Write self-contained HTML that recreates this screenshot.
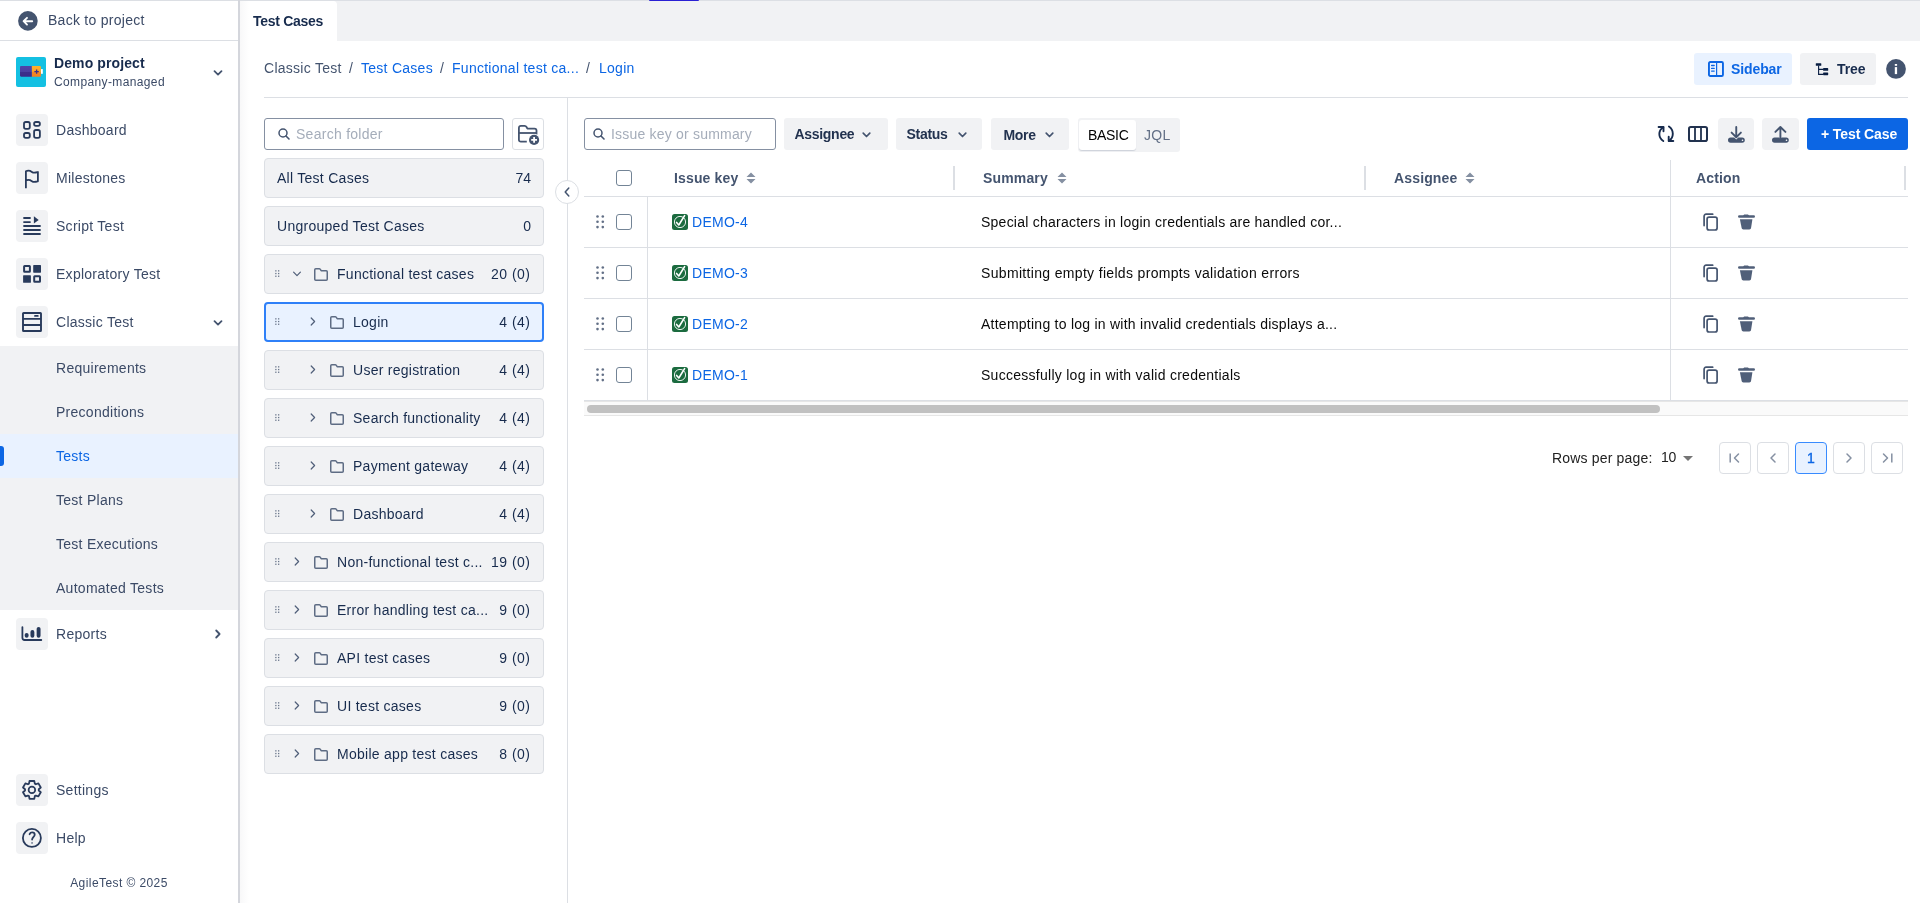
<!DOCTYPE html>
<html><head><meta charset="utf-8">
<style>
*{box-sizing:border-box;margin:0;padding:0}
html,body{will-change:transform;width:1920px;height:903px;overflow:hidden;background:#fff;font-family:"Liberation Sans",sans-serif;color:#172b4d;font-size:14px}
.a{position:absolute}
.t{position:absolute;white-space:nowrap;line-height:1}
.ibox{position:absolute;left:16px;width:32px;height:32px;background:#f1f2f4;border-radius:4px}
.ibox svg{position:absolute;left:0;top:0}
.box{position:absolute;left:264px;width:280px;height:39.5px;background:#f1f2f4;border:1px solid #dcdfe4;border-radius:4px}
.box.sel{background:#e9f2ff;border:2px solid #2f80f8}
svg{position:absolute;overflow:visible}
</style></head><body>
<div class="a" style="left:0;top:0;width:1920px;height:1px;background:#dcdfe4"></div>
<div class="a" style="left:238px;top:0;width:2px;height:903px;background:#d4d6dc"></div>
<div class="a" style="left:240px;top:41px;width:9px;height:862px;background:linear-gradient(to right,#f8f8f9,rgba(255,255,255,0))"></div>
<svg style="left:18px;top:11px" width="20" height="20" viewBox="0 0 20 20"><circle cx="9.9" cy="9.9" r="9.8" fill="#44546f"/><path d="M14.2 10.2H6.4M9 6.8L5.6 10.2 9 13.6" stroke="#fff" stroke-width="1.9" fill="none" stroke-linecap="round" stroke-linejoin="round"/></svg>
<div class="t" style="left:48px;top:13.15px;font-size:14px;letter-spacing:0.27px;color:#3b4a66">Back to project</div>
<div class="a" style="left:0;top:40px;width:238px;height:1px;background:#dcdfe4"></div>
<div class="a" style="left:16px;top:57px;width:30px;height:30px;background:#14c0e2;border-radius:2px"></div>
<svg style="left:16px;top:57px" width="30" height="30" viewBox="0 0 30 30"><defs><linearGradient id="gp" x1="0" y1="0" x2="0" y2="1"><stop offset="0" stop-color="#4f44a8"/><stop offset="0.55" stop-color="#4a3f9f"/><stop offset="0.56" stop-color="#3d2f8c"/><stop offset="1" stop-color="#3a2b88"/></linearGradient><linearGradient id="go" x1="0" y1="0" x2="0" y2="1"><stop offset="0" stop-color="#ffb02a"/><stop offset="0.5" stop-color="#fca426"/><stop offset="0.52" stop-color="#f38b25"/><stop offset="1" stop-color="#f47f1f"/></linearGradient></defs><path d="M5.2 9.1H15.9V19.8H5.2C4.5 19.8 4 19.3 4 18.6V10.3C4 9.6 4.5 9.1 5.2 9.1z" fill="url(#gp)"/><path d="M15.9 9.1H23.8C24.4 9.1 24.9 9.6 24.9 10.2V18.7C24.9 19.3 24.4 19.8 23.8 19.8H15.9z" fill="url(#go)"/><rect x="25" y="12.1" width="1.8" height="4.7" fill="#fff"/><path d="M20.6 12.4v4.4M18.4 14.6h4.4" stroke="#3b2e8a" stroke-width="1.3"/></svg>
<div class="t" style="left:54px;top:56.15px;font-size:14px;letter-spacing:0.10px;color:#172b4d;font-weight:bold">Demo project</div>
<div class="t" style="left:54px;top:75.84px;font-size:12px;letter-spacing:0.37px;color:#3b4a66">Company-managed</div>
<svg style="left:213px;top:70px" width="10" height="6" viewBox="0 0 10 6"><path d="M1.5 1.2L5 4.6l3.5-3.4" stroke="#44546f" stroke-width="1.8" fill="none" stroke-linecap="round" stroke-linejoin="round"/></svg>
<div class="ibox" style="top:114px"><svg width="32" height="32" viewBox="0 0 32 32"><rect x="8.0" y="8.0" width="5.8" height="6.9" rx="1.8" fill="none" stroke="#283a5b" stroke-width="1.8"/><rect x="18.1" y="8.0" width="5.8" height="3.9" rx="1.8" fill="none" stroke="#283a5b" stroke-width="1.8"/><rect x="8.0" y="19.0" width="5.8" height="4.9" rx="1.8" fill="none" stroke="#283a5b" stroke-width="1.8"/><rect x="18.1" y="16.0" width="5.8" height="7.9" rx="1.8" fill="none" stroke="#283a5b" stroke-width="1.8"/></svg></div>
<div class="t" style="left:56px;top:123.15px;font-size:14px;letter-spacing:0.27px;color:#3b4a66">Dashboard</div>
<div class="ibox" style="top:162px"><svg width="32" height="32" viewBox="0 0 32 32"><path d="M9.9 26.3V9.2c2.4-1.2 4.2-0.6 6 0.7c2 1.4 3.6 0.8 6 0.1V19.3c-2.4 0.7-4 1.3-6-0.1c-1.8-1.3-3.6-1.9-6-0.7" fill="none" stroke="#283a5b" stroke-width="1.8" stroke-linejoin="round"/></svg></div>
<div class="t" style="left:56px;top:171.15px;font-size:14px;letter-spacing:0.27px;color:#3b4a66">Milestones</div>
<div class="ibox" style="top:210px"><svg width="32" height="32" viewBox="0 0 32 32"><path d="M8 8h6M8 12.05h6M8 16h16M8 20h16M8 24h16" stroke="#283a5b" stroke-width="1.8" stroke-linecap="round"/><path d="M17.9 6.2L22.7 9.9 17.9 13.6z" fill="#283a5b"/></svg></div>
<div class="t" style="left:56px;top:219.15px;font-size:14px;letter-spacing:0.27px;color:#3b4a66">Script Test</div>
<div class="ibox" style="top:258px"><svg width="32" height="32" viewBox="0 0 32 32"><rect x="8.1" y="8.1" width="5.8" height="5.6" rx="0.5" fill="none" stroke="#283a5b" stroke-width="2"/><rect x="17.2" y="7.1" width="7.8" height="7.6" rx="0.6" fill="#283a5b"/><rect x="7.1" y="17.2" width="7.8" height="7.6" rx="0.6" fill="#283a5b"/><rect x="18.2" y="18.2" width="5.8" height="5.6" rx="0.5" fill="none" stroke="#283a5b" stroke-width="2"/></svg></div>
<div class="t" style="left:56px;top:267.15px;font-size:14px;letter-spacing:0.27px;color:#3b4a66">Exploratory Test</div>
<div class="ibox" style="top:306px"><svg width="32" height="32" viewBox="0 0 32 32"><rect x="7" y="7" width="18" height="18" rx="0.6" fill="none" stroke="#283a5b" stroke-width="1.9"/><path d="M7 12.9h18M7 19h18" stroke="#283a5b" stroke-width="1.8"/><path d="M19 9.9h2.8" stroke="#283a5b" stroke-width="1.8" stroke-linecap="round"/></svg></div>
<div class="t" style="left:56px;top:315.15px;font-size:14px;letter-spacing:0.27px;color:#3b4a66">Classic Test</div>
<svg style="left:213px;top:320px" width="10" height="6" viewBox="0 0 10 6"><path d="M1.5 1.2L5 4.6l3.5-3.4" stroke="#44546f" stroke-width="1.8" fill="none" stroke-linecap="round" stroke-linejoin="round"/></svg>
<div class="a" style="left:0;top:346px;width:238px;height:264px;background:#f1f2f4"></div>
<div class="a" style="left:0;top:434px;width:238px;height:44px;background:#e9f2ff"></div>
<div class="a" style="left:0;top:446px;width:4px;height:20px;background:#0c66e4;border-radius:0 3px 3px 0"></div>
<div class="t" style="left:56px;top:361.15px;font-size:14px;letter-spacing:0.27px;color:#3b4a66">Requirements</div>
<div class="t" style="left:56px;top:405.15px;font-size:14px;letter-spacing:0.27px;color:#3b4a66">Preconditions</div>
<div class="t" style="left:56px;top:449.15px;font-size:14px;letter-spacing:0.27px;color:#0c66e4">Tests</div>
<div class="t" style="left:56px;top:493.15px;font-size:14px;letter-spacing:0.27px;color:#3b4a66">Test Plans</div>
<div class="t" style="left:56px;top:537.15px;font-size:14px;letter-spacing:0.27px;color:#3b4a66">Test Executions</div>
<div class="t" style="left:56px;top:581.15px;font-size:14px;letter-spacing:0.27px;color:#3b4a66">Automated Tests</div>
<div class="ibox" style="top:618px"><svg width="32" height="32" viewBox="0 0 32 32"><path d="M6.4 9.2v10.6c0 1.3 1 2.2 2.2 2.2h16.7" fill="none" stroke="#283a5b" stroke-width="1.8" stroke-linecap="round"/><path d="M10.65 16.85v1M16.4 13.95v3.9M22.6 10.85v7" stroke="#283a5b" stroke-width="3.9" stroke-linecap="round"/></svg></div>
<div class="t" style="left:56px;top:627.15px;font-size:14px;letter-spacing:0.27px;color:#3b4a66">Reports</div>
<svg style="left:215px;top:629px" width="6" height="10" viewBox="0 0 6 10"><path d="M1.2 1.5L4.6 5 1.2 8.5" stroke="#44546f" stroke-width="1.8" fill="none" stroke-linecap="round" stroke-linejoin="round"/></svg>
<div class="ibox" style="top:774px"><svg width="32" height="32" viewBox="0 0 32 32"><path d="M13.52 7.01 L18.28 7.01 L18.82 9.65 L19.86 10.25 L22.41 9.39 L24.79 13.52 L22.77 15.30 L22.77 16.50 L24.79 18.28 L22.41 22.41 L19.86 21.55 L18.82 22.15 L18.28 24.79 L13.52 24.79 L12.98 22.15 L11.94 21.55 L9.39 22.41 L7.01 18.28 L9.03 16.50 L9.03 15.30 L7.01 13.52 L9.39 9.39 L11.94 10.25 L12.98 9.65Z" fill="none" stroke="#283a5b" stroke-width="1.8" stroke-linejoin="round"/><circle cx="15.9" cy="15.9" r="3.3" fill="none" stroke="#283a5b" stroke-width="1.7"/></svg></div>
<div class="t" style="left:56px;top:783.15px;font-size:14px;letter-spacing:0.27px;color:#3b4a66">Settings</div>
<div class="ibox" style="top:822px"><svg width="32" height="32" viewBox="0 0 32 32"><circle cx="15.9" cy="15.9" r="9" fill="none" stroke="#283a5b" stroke-width="1.8"/><path d="M13.6 12.2c0.5-1.2 1.4-1.8 2.5-1.8c1.5 0 2.6 1 2.6 2.3c0 1.9-2.6 2.4-2.6 4.9" fill="none" stroke="#283a5b" stroke-width="1.8" stroke-linecap="round"/><rect x="15.4" y="20.3" width="1.3" height="1.3" fill="#283a5b"/></svg></div>
<div class="t" style="left:56px;top:831.15px;font-size:14px;letter-spacing:0.27px;color:#3b4a66">Help</div>
<div class="t" style="left:0;width:238px;text-align:center;top:876.84px;font-size:12px;letter-spacing:0.42px;color:#3b4a66">AgileTest © 2025</div>
<div class="a" style="left:240px;top:1px;width:1680px;height:40px;background:#f1f2f4"></div>
<div class="a" style="left:240px;top:1px;width:97px;height:40px;background:#fff;border-radius:0 4px 0 0"></div>
<div class="t" style="left:253px;top:14.15px;font-size:14px;letter-spacing:-0.30px;color:#172b4d;font-weight:bold">Test Cases</div>
<div class="a" style="left:649px;top:0;width:50px;height:1px;background:#2a20d4;border-radius:0 0 1px 1px"></div>
<div class="a" style="left:240px;top:1px;width:9px;height:40px;background:linear-gradient(to right,#f8f8f9,rgba(255,255,255,0))"></div>
<div class="t" style="left:264px;top:61.15px;font-size:14px;letter-spacing:0.27px;color:#44546f">Classic Test</div>
<div class="t" style="left:349px;top:61.15px;font-size:14px;letter-spacing:0.27px;color:#44546f">/</div>
<div class="t" style="left:361px;top:61.15px;font-size:14px;letter-spacing:0.27px;color:#0c66e4">Test Cases</div>
<div class="t" style="left:440px;top:61.15px;font-size:14px;letter-spacing:0.27px;color:#44546f">/</div>
<div class="t" style="left:452px;top:61.15px;font-size:14px;letter-spacing:0.27px;color:#0c66e4">Functional test ca...</div>
<div class="t" style="left:586px;top:61.15px;font-size:14px;letter-spacing:0.27px;color:#44546f">/</div>
<div class="t" style="left:599px;top:61.15px;font-size:14px;letter-spacing:0.27px;color:#0c66e4">Login</div>
<div class="a" style="left:264px;top:97px;width:1644px;height:1px;background:#dcdfe4"></div>
<div class="a" style="left:1694px;top:53px;width:98px;height:32px;background:#e9f2ff;border-radius:3px"></div>
<svg style="left:1708px;top:61px" width="16" height="16" viewBox="0 0 16 16"><rect x="0.95" y="0.95" width="14" height="14" rx="1.3" fill="none" stroke="#0c66e4" stroke-width="1.9"/><path d="M8.6 1v14" stroke="#0c66e4" stroke-width="1.2"/><path d="M3.6 4.5h2.6M3.6 7.4h2.6M3.6 10.1h2.6" stroke="#0c66e4" stroke-width="1.3" stroke-linecap="round"/></svg>
<div class="t" style="left:1731px;top:62.15px;font-size:14px;letter-spacing:-0.10px;color:#0c66e4;font-weight:bold">Sidebar</div>
<div class="a" style="left:1800px;top:53px;width:76px;height:32px;background:#f1f2f4;border-radius:3px"></div>
<svg style="left:1815px;top:62px" width="15" height="15" viewBox="0 0 15 15"><rect x="0.8" y="1.2" width="5.5" height="2.6" rx="0.6" fill="#091e42"/><path d="M3.6 3.5V12.4H8.5M3.6 7.4H8.5" stroke="#091e42" stroke-width="1.1" fill="none"/><rect x="8.1" y="6.1" width="5.1" height="2.7" rx="0.6" fill="#091e42"/><rect x="8.1" y="10.4" width="5.1" height="2.8" rx="0.6" fill="#091e42"/></svg>
<div class="t" style="left:1837px;top:62.15px;font-size:14px;letter-spacing:-0.10px;color:#172b4d;font-weight:bold">Tree</div>
<svg style="left:1886px;top:59px" width="20" height="20" viewBox="0 0 20 20"><circle cx="10" cy="9.9" r="9.9" fill="#44546f"/><rect x="8.8" y="5" width="2.3" height="1.8" fill="#fff"/><rect x="8.8" y="8.1" width="2.3" height="7" fill="#fff"/></svg>
<div class="a" style="left:264px;top:118px;width:240px;height:32px;border:1px solid #8590a2;border-radius:3px;background:#fff"></div>
<svg style="left:278px;top:128px" width="12" height="12" viewBox="0 0 12 12"><circle cx="5" cy="5" r="4" fill="none" stroke="#44546f" stroke-width="1.5"/><path d="M8 8l3 3" stroke="#44546f" stroke-width="1.6" stroke-linecap="round"/></svg>
<div class="t" style="left:296px;top:127.15px;font-size:14px;letter-spacing:0.27px;color:#a5adba">Search folder</div>
<div class="a" style="left:512px;top:118px;width:32px;height:32px;border:1px solid #dcdfe4;border-radius:3px;background:#fff"></div>
<svg style="left:518px;top:125px" width="22" height="20" viewBox="0 0 22 20"><path d="M8.8 16.7H2.9C1.7 16.7 0.9 15.9 0.9 14.7V2.9C0.9 1.7 1.7 0.9 2.9 0.9H6.6C7.6 0.9 8.2 1.4 8.7 2.3L9.4 3.6H16.5C17.7 3.6 18.5 4.4 18.5 5.6V9.5" fill="none" stroke="#44546f" stroke-width="1.8" stroke-linejoin="round"/><path d="M0.9 8H18.5" stroke="#44546f" stroke-width="1.8"/><circle cx="16.1" cy="14.9" r="5.8" fill="#fff"/><circle cx="16.1" cy="14.9" r="5.1" fill="#44546f"/><path d="M16.1 12v5.8M13.2 14.9H19" stroke="#fff" stroke-width="1.8"/></svg>
<div class="box" style="top:158px"></div>
<div class="t" style="left:277px;top:171.15px;font-size:14px;letter-spacing:0.27px;color:#172b4d">All Test Cases</div>
<div class="t" style="right:1389px;top:171.15px;font-size:14px;color:#172b4d">74</div>
<div class="box" style="top:206px"></div>
<div class="t" style="left:277px;top:219.15px;font-size:14px;letter-spacing:0.27px;color:#172b4d">Ungrouped Test Cases</div>
<div class="t" style="right:1389px;top:219.15px;font-size:14px;color:#172b4d">0</div>
<div class="box" style="top:254px"></div>
<svg style="left:275px;top:270.2px" width="5" height="8" viewBox="0 0 5 8"><rect x="0.20000000000000007" y="0.20000000000000007" width="1.3" height="1.3" fill="#6b778c"/><rect x="0.20000000000000007" y="2.9" width="1.3" height="1.3" fill="#6b778c"/><rect x="0.20000000000000007" y="5.6000000000000005" width="1.3" height="1.3" fill="#6b778c"/><rect x="3.0" y="0.20000000000000007" width="1.3" height="1.3" fill="#6b778c"/><rect x="3.0" y="2.9" width="1.3" height="1.3" fill="#6b778c"/><rect x="3.0" y="5.6000000000000005" width="1.3" height="1.3" fill="#6b778c"/></svg>
<svg style="left:292px;top:270.5px" width="10" height="6" viewBox="0 0 10 6"><path d="M1.6 1.2L5 4.6 8.4 1.2" stroke="#505f79" stroke-width="1.2" fill="none" stroke-linecap="round" stroke-linejoin="round"/></svg>
<svg style="left:314px;top:267.5px" width="14" height="13" viewBox="0 0 14 13"><path d="M0.75 1.8c0-.6.4-1 1-1h3.5c.5 0 .8.2 1.1.6l.8 1.3h5.1c.6 0 1 .4 1 1v7.6c0 .6-.4 1-1 1H1.75c-.6 0-1-.4-1-1z" fill="none" stroke="#5e6c84" stroke-width="1.5" stroke-linejoin="round"/></svg>
<div class="t" style="left:337px;top:266.95px;font-size:14px;letter-spacing:0.27px;color:#172b4d">Functional test cases</div>
<div class="t" style="right:1389.5px;top:266.95px;font-size:14px;letter-spacing:0.5px;color:#172b4d">20 (0)</div>
<div class="box sel" style="top:302px"></div>
<svg style="left:275px;top:318.2px" width="5" height="8" viewBox="0 0 5 8"><rect x="0.20000000000000007" y="0.20000000000000007" width="1.3" height="1.3" fill="#6b778c"/><rect x="0.20000000000000007" y="2.9" width="1.3" height="1.3" fill="#6b778c"/><rect x="0.20000000000000007" y="5.6000000000000005" width="1.3" height="1.3" fill="#6b778c"/><rect x="3.0" y="0.20000000000000007" width="1.3" height="1.3" fill="#6b778c"/><rect x="3.0" y="2.9" width="1.3" height="1.3" fill="#6b778c"/><rect x="3.0" y="5.6000000000000005" width="1.3" height="1.3" fill="#6b778c"/></svg>
<svg style="left:310px;top:317.3px" width="6" height="9" viewBox="0 0 6 9"><path d="M1.2 1l3.4 3.5L1.2 8" stroke="#505f79" stroke-width="1.2" fill="none" stroke-linecap="round" stroke-linejoin="round"/></svg>
<svg style="left:330px;top:315.5px" width="14" height="13" viewBox="0 0 14 13"><path d="M0.75 1.8c0-.6.4-1 1-1h3.5c.5 0 .8.2 1.1.6l.8 1.3h5.1c.6 0 1 .4 1 1v7.6c0 .6-.4 1-1 1H1.75c-.6 0-1-.4-1-1z" fill="none" stroke="#5e6c84" stroke-width="1.5" stroke-linejoin="round"/></svg>
<div class="t" style="left:353px;top:314.95px;font-size:14px;letter-spacing:0.27px;color:#172b4d">Login</div>
<div class="t" style="right:1389.5px;top:314.95px;font-size:14px;letter-spacing:0.5px;color:#172b4d">4 (4)</div>
<div class="box" style="top:350px"></div>
<svg style="left:275px;top:366.2px" width="5" height="8" viewBox="0 0 5 8"><rect x="0.20000000000000007" y="0.20000000000000007" width="1.3" height="1.3" fill="#6b778c"/><rect x="0.20000000000000007" y="2.9" width="1.3" height="1.3" fill="#6b778c"/><rect x="0.20000000000000007" y="5.6000000000000005" width="1.3" height="1.3" fill="#6b778c"/><rect x="3.0" y="0.20000000000000007" width="1.3" height="1.3" fill="#6b778c"/><rect x="3.0" y="2.9" width="1.3" height="1.3" fill="#6b778c"/><rect x="3.0" y="5.6000000000000005" width="1.3" height="1.3" fill="#6b778c"/></svg>
<svg style="left:310px;top:365.3px" width="6" height="9" viewBox="0 0 6 9"><path d="M1.2 1l3.4 3.5L1.2 8" stroke="#505f79" stroke-width="1.2" fill="none" stroke-linecap="round" stroke-linejoin="round"/></svg>
<svg style="left:330px;top:363.5px" width="14" height="13" viewBox="0 0 14 13"><path d="M0.75 1.8c0-.6.4-1 1-1h3.5c.5 0 .8.2 1.1.6l.8 1.3h5.1c.6 0 1 .4 1 1v7.6c0 .6-.4 1-1 1H1.75c-.6 0-1-.4-1-1z" fill="none" stroke="#5e6c84" stroke-width="1.5" stroke-linejoin="round"/></svg>
<div class="t" style="left:353px;top:362.95px;font-size:14px;letter-spacing:0.27px;color:#172b4d">User registration</div>
<div class="t" style="right:1389.5px;top:362.95px;font-size:14px;letter-spacing:0.5px;color:#172b4d">4 (4)</div>
<div class="box" style="top:398px"></div>
<svg style="left:275px;top:414.2px" width="5" height="8" viewBox="0 0 5 8"><rect x="0.20000000000000007" y="0.20000000000000007" width="1.3" height="1.3" fill="#6b778c"/><rect x="0.20000000000000007" y="2.9" width="1.3" height="1.3" fill="#6b778c"/><rect x="0.20000000000000007" y="5.6000000000000005" width="1.3" height="1.3" fill="#6b778c"/><rect x="3.0" y="0.20000000000000007" width="1.3" height="1.3" fill="#6b778c"/><rect x="3.0" y="2.9" width="1.3" height="1.3" fill="#6b778c"/><rect x="3.0" y="5.6000000000000005" width="1.3" height="1.3" fill="#6b778c"/></svg>
<svg style="left:310px;top:413.3px" width="6" height="9" viewBox="0 0 6 9"><path d="M1.2 1l3.4 3.5L1.2 8" stroke="#505f79" stroke-width="1.2" fill="none" stroke-linecap="round" stroke-linejoin="round"/></svg>
<svg style="left:330px;top:411.5px" width="14" height="13" viewBox="0 0 14 13"><path d="M0.75 1.8c0-.6.4-1 1-1h3.5c.5 0 .8.2 1.1.6l.8 1.3h5.1c.6 0 1 .4 1 1v7.6c0 .6-.4 1-1 1H1.75c-.6 0-1-.4-1-1z" fill="none" stroke="#5e6c84" stroke-width="1.5" stroke-linejoin="round"/></svg>
<div class="t" style="left:353px;top:410.95px;font-size:14px;letter-spacing:0.27px;color:#172b4d">Search functionality</div>
<div class="t" style="right:1389.5px;top:410.95px;font-size:14px;letter-spacing:0.5px;color:#172b4d">4 (4)</div>
<div class="box" style="top:446px"></div>
<svg style="left:275px;top:462.2px" width="5" height="8" viewBox="0 0 5 8"><rect x="0.20000000000000007" y="0.20000000000000007" width="1.3" height="1.3" fill="#6b778c"/><rect x="0.20000000000000007" y="2.9" width="1.3" height="1.3" fill="#6b778c"/><rect x="0.20000000000000007" y="5.6000000000000005" width="1.3" height="1.3" fill="#6b778c"/><rect x="3.0" y="0.20000000000000007" width="1.3" height="1.3" fill="#6b778c"/><rect x="3.0" y="2.9" width="1.3" height="1.3" fill="#6b778c"/><rect x="3.0" y="5.6000000000000005" width="1.3" height="1.3" fill="#6b778c"/></svg>
<svg style="left:310px;top:461.3px" width="6" height="9" viewBox="0 0 6 9"><path d="M1.2 1l3.4 3.5L1.2 8" stroke="#505f79" stroke-width="1.2" fill="none" stroke-linecap="round" stroke-linejoin="round"/></svg>
<svg style="left:330px;top:459.5px" width="14" height="13" viewBox="0 0 14 13"><path d="M0.75 1.8c0-.6.4-1 1-1h3.5c.5 0 .8.2 1.1.6l.8 1.3h5.1c.6 0 1 .4 1 1v7.6c0 .6-.4 1-1 1H1.75c-.6 0-1-.4-1-1z" fill="none" stroke="#5e6c84" stroke-width="1.5" stroke-linejoin="round"/></svg>
<div class="t" style="left:353px;top:458.95px;font-size:14px;letter-spacing:0.27px;color:#172b4d">Payment gateway</div>
<div class="t" style="right:1389.5px;top:458.95px;font-size:14px;letter-spacing:0.5px;color:#172b4d">4 (4)</div>
<div class="box" style="top:494px"></div>
<svg style="left:275px;top:510.19999999999993px" width="5" height="8" viewBox="0 0 5 8"><rect x="0.20000000000000007" y="0.20000000000000007" width="1.3" height="1.3" fill="#6b778c"/><rect x="0.20000000000000007" y="2.9" width="1.3" height="1.3" fill="#6b778c"/><rect x="0.20000000000000007" y="5.6000000000000005" width="1.3" height="1.3" fill="#6b778c"/><rect x="3.0" y="0.20000000000000007" width="1.3" height="1.3" fill="#6b778c"/><rect x="3.0" y="2.9" width="1.3" height="1.3" fill="#6b778c"/><rect x="3.0" y="5.6000000000000005" width="1.3" height="1.3" fill="#6b778c"/></svg>
<svg style="left:310px;top:509.29999999999995px" width="6" height="9" viewBox="0 0 6 9"><path d="M1.2 1l3.4 3.5L1.2 8" stroke="#505f79" stroke-width="1.2" fill="none" stroke-linecap="round" stroke-linejoin="round"/></svg>
<svg style="left:330px;top:507.49999999999994px" width="14" height="13" viewBox="0 0 14 13"><path d="M0.75 1.8c0-.6.4-1 1-1h3.5c.5 0 .8.2 1.1.6l.8 1.3h5.1c.6 0 1 .4 1 1v7.6c0 .6-.4 1-1 1H1.75c-.6 0-1-.4-1-1z" fill="none" stroke="#5e6c84" stroke-width="1.5" stroke-linejoin="round"/></svg>
<div class="t" style="left:353px;top:506.95px;font-size:14px;letter-spacing:0.27px;color:#172b4d">Dashboard</div>
<div class="t" style="right:1389.5px;top:506.95px;font-size:14px;letter-spacing:0.5px;color:#172b4d">4 (4)</div>
<div class="box" style="top:542px"></div>
<svg style="left:275px;top:558.1999999999999px" width="5" height="8" viewBox="0 0 5 8"><rect x="0.20000000000000007" y="0.20000000000000007" width="1.3" height="1.3" fill="#6b778c"/><rect x="0.20000000000000007" y="2.9" width="1.3" height="1.3" fill="#6b778c"/><rect x="0.20000000000000007" y="5.6000000000000005" width="1.3" height="1.3" fill="#6b778c"/><rect x="3.0" y="0.20000000000000007" width="1.3" height="1.3" fill="#6b778c"/><rect x="3.0" y="2.9" width="1.3" height="1.3" fill="#6b778c"/><rect x="3.0" y="5.6000000000000005" width="1.3" height="1.3" fill="#6b778c"/></svg>
<svg style="left:294px;top:557.3px" width="6" height="9" viewBox="0 0 6 9"><path d="M1.2 1l3.4 3.5L1.2 8" stroke="#505f79" stroke-width="1.2" fill="none" stroke-linecap="round" stroke-linejoin="round"/></svg>
<svg style="left:314px;top:555.5px" width="14" height="13" viewBox="0 0 14 13"><path d="M0.75 1.8c0-.6.4-1 1-1h3.5c.5 0 .8.2 1.1.6l.8 1.3h5.1c.6 0 1 .4 1 1v7.6c0 .6-.4 1-1 1H1.75c-.6 0-1-.4-1-1z" fill="none" stroke="#5e6c84" stroke-width="1.5" stroke-linejoin="round"/></svg>
<div class="t" style="left:337px;top:554.95px;font-size:14px;letter-spacing:0.27px;color:#172b4d">Non-functional test c...</div>
<div class="t" style="right:1389.5px;top:554.95px;font-size:14px;letter-spacing:0.5px;color:#172b4d">19 (0)</div>
<div class="box" style="top:590px"></div>
<svg style="left:275px;top:606.1999999999999px" width="5" height="8" viewBox="0 0 5 8"><rect x="0.20000000000000007" y="0.20000000000000007" width="1.3" height="1.3" fill="#6b778c"/><rect x="0.20000000000000007" y="2.9" width="1.3" height="1.3" fill="#6b778c"/><rect x="0.20000000000000007" y="5.6000000000000005" width="1.3" height="1.3" fill="#6b778c"/><rect x="3.0" y="0.20000000000000007" width="1.3" height="1.3" fill="#6b778c"/><rect x="3.0" y="2.9" width="1.3" height="1.3" fill="#6b778c"/><rect x="3.0" y="5.6000000000000005" width="1.3" height="1.3" fill="#6b778c"/></svg>
<svg style="left:294px;top:605.3px" width="6" height="9" viewBox="0 0 6 9"><path d="M1.2 1l3.4 3.5L1.2 8" stroke="#505f79" stroke-width="1.2" fill="none" stroke-linecap="round" stroke-linejoin="round"/></svg>
<svg style="left:314px;top:603.5px" width="14" height="13" viewBox="0 0 14 13"><path d="M0.75 1.8c0-.6.4-1 1-1h3.5c.5 0 .8.2 1.1.6l.8 1.3h5.1c.6 0 1 .4 1 1v7.6c0 .6-.4 1-1 1H1.75c-.6 0-1-.4-1-1z" fill="none" stroke="#5e6c84" stroke-width="1.5" stroke-linejoin="round"/></svg>
<div class="t" style="left:337px;top:602.95px;font-size:14px;letter-spacing:0.27px;color:#172b4d">Error handling test ca...</div>
<div class="t" style="right:1389.5px;top:602.95px;font-size:14px;letter-spacing:0.5px;color:#172b4d">9 (0)</div>
<div class="box" style="top:638px"></div>
<svg style="left:275px;top:654.1999999999999px" width="5" height="8" viewBox="0 0 5 8"><rect x="0.20000000000000007" y="0.20000000000000007" width="1.3" height="1.3" fill="#6b778c"/><rect x="0.20000000000000007" y="2.9" width="1.3" height="1.3" fill="#6b778c"/><rect x="0.20000000000000007" y="5.6000000000000005" width="1.3" height="1.3" fill="#6b778c"/><rect x="3.0" y="0.20000000000000007" width="1.3" height="1.3" fill="#6b778c"/><rect x="3.0" y="2.9" width="1.3" height="1.3" fill="#6b778c"/><rect x="3.0" y="5.6000000000000005" width="1.3" height="1.3" fill="#6b778c"/></svg>
<svg style="left:294px;top:653.3px" width="6" height="9" viewBox="0 0 6 9"><path d="M1.2 1l3.4 3.5L1.2 8" stroke="#505f79" stroke-width="1.2" fill="none" stroke-linecap="round" stroke-linejoin="round"/></svg>
<svg style="left:314px;top:651.5px" width="14" height="13" viewBox="0 0 14 13"><path d="M0.75 1.8c0-.6.4-1 1-1h3.5c.5 0 .8.2 1.1.6l.8 1.3h5.1c.6 0 1 .4 1 1v7.6c0 .6-.4 1-1 1H1.75c-.6 0-1-.4-1-1z" fill="none" stroke="#5e6c84" stroke-width="1.5" stroke-linejoin="round"/></svg>
<div class="t" style="left:337px;top:650.95px;font-size:14px;letter-spacing:0.27px;color:#172b4d">API test cases</div>
<div class="t" style="right:1389.5px;top:650.95px;font-size:14px;letter-spacing:0.5px;color:#172b4d">9 (0)</div>
<div class="box" style="top:686px"></div>
<svg style="left:275px;top:702.1999999999999px" width="5" height="8" viewBox="0 0 5 8"><rect x="0.20000000000000007" y="0.20000000000000007" width="1.3" height="1.3" fill="#6b778c"/><rect x="0.20000000000000007" y="2.9" width="1.3" height="1.3" fill="#6b778c"/><rect x="0.20000000000000007" y="5.6000000000000005" width="1.3" height="1.3" fill="#6b778c"/><rect x="3.0" y="0.20000000000000007" width="1.3" height="1.3" fill="#6b778c"/><rect x="3.0" y="2.9" width="1.3" height="1.3" fill="#6b778c"/><rect x="3.0" y="5.6000000000000005" width="1.3" height="1.3" fill="#6b778c"/></svg>
<svg style="left:294px;top:701.3px" width="6" height="9" viewBox="0 0 6 9"><path d="M1.2 1l3.4 3.5L1.2 8" stroke="#505f79" stroke-width="1.2" fill="none" stroke-linecap="round" stroke-linejoin="round"/></svg>
<svg style="left:314px;top:699.5px" width="14" height="13" viewBox="0 0 14 13"><path d="M0.75 1.8c0-.6.4-1 1-1h3.5c.5 0 .8.2 1.1.6l.8 1.3h5.1c.6 0 1 .4 1 1v7.6c0 .6-.4 1-1 1H1.75c-.6 0-1-.4-1-1z" fill="none" stroke="#5e6c84" stroke-width="1.5" stroke-linejoin="round"/></svg>
<div class="t" style="left:337px;top:698.95px;font-size:14px;letter-spacing:0.27px;color:#172b4d">UI test cases</div>
<div class="t" style="right:1389.5px;top:698.95px;font-size:14px;letter-spacing:0.5px;color:#172b4d">9 (0)</div>
<div class="box" style="top:734px"></div>
<svg style="left:275px;top:750.1999999999999px" width="5" height="8" viewBox="0 0 5 8"><rect x="0.20000000000000007" y="0.20000000000000007" width="1.3" height="1.3" fill="#6b778c"/><rect x="0.20000000000000007" y="2.9" width="1.3" height="1.3" fill="#6b778c"/><rect x="0.20000000000000007" y="5.6000000000000005" width="1.3" height="1.3" fill="#6b778c"/><rect x="3.0" y="0.20000000000000007" width="1.3" height="1.3" fill="#6b778c"/><rect x="3.0" y="2.9" width="1.3" height="1.3" fill="#6b778c"/><rect x="3.0" y="5.6000000000000005" width="1.3" height="1.3" fill="#6b778c"/></svg>
<svg style="left:294px;top:749.3px" width="6" height="9" viewBox="0 0 6 9"><path d="M1.2 1l3.4 3.5L1.2 8" stroke="#505f79" stroke-width="1.2" fill="none" stroke-linecap="round" stroke-linejoin="round"/></svg>
<svg style="left:314px;top:747.5px" width="14" height="13" viewBox="0 0 14 13"><path d="M0.75 1.8c0-.6.4-1 1-1h3.5c.5 0 .8.2 1.1.6l.8 1.3h5.1c.6 0 1 .4 1 1v7.6c0 .6-.4 1-1 1H1.75c-.6 0-1-.4-1-1z" fill="none" stroke="#5e6c84" stroke-width="1.5" stroke-linejoin="round"/></svg>
<div class="t" style="left:337px;top:746.95px;font-size:14px;letter-spacing:0.27px;color:#172b4d">Mobile app test cases</div>
<div class="t" style="right:1389.5px;top:746.95px;font-size:14px;letter-spacing:0.5px;color:#172b4d">8 (0)</div>
<div class="a" style="left:567px;top:98px;width:1px;height:805px;background:#dcdfe4"></div>
<div class="a" style="left:555px;top:179.5px;width:24px;height:24px;border-radius:50%;background:#fff;border:1px solid #dcdfe4"></div>
<svg style="left:564px;top:186.7px" width="6" height="10" viewBox="0 0 6 10"><path d="M4.8 1L1.2 5l3.6 4" stroke="#44546f" stroke-width="1.5" fill="none" stroke-linecap="round" stroke-linejoin="round"/></svg>
<div class="a" style="left:584px;top:118px;width:192px;height:32px;border:1px solid #8590a2;border-radius:3px;background:#fff"></div>
<svg style="left:593px;top:128px" width="12" height="12" viewBox="0 0 12 12"><circle cx="5" cy="5" r="4" fill="none" stroke="#44546f" stroke-width="1.5"/><path d="M8 8l3 3" stroke="#44546f" stroke-width="1.6" stroke-linecap="round"/></svg>
<div class="t" style="left:611px;top:127.15px;font-size:14px;letter-spacing:0.20px;color:#a5adba">Issue key or summary</div>
<div class="a" style="left:784px;top:118px;width:104px;height:32px;background:#f1f2f4;border-radius:3px"></div>
<div class="t" style="left:794.5px;top:127.15px;font-size:14px;letter-spacing:-0.30px;color:#22324f;font-weight:bold">Assignee</div>
<svg style="left:862px;top:132px" width="9" height="6" viewBox="0 0 9 6"><path d="M1.2 1.2L4.5 4.5 7.8 1.2" stroke="#44546f" stroke-width="1.7" fill="none" stroke-linecap="round" stroke-linejoin="round"/></svg>
<div class="a" style="left:896px;top:118px;width:86px;height:32px;background:#f1f2f4;border-radius:3px"></div>
<div class="t" style="left:906.5px;top:127.15px;font-size:14px;letter-spacing:-0.30px;color:#22324f;font-weight:bold">Status</div>
<svg style="left:958px;top:132px" width="9" height="6" viewBox="0 0 9 6"><path d="M1.2 1.2L4.5 4.5 7.8 1.2" stroke="#44546f" stroke-width="1.7" fill="none" stroke-linecap="round" stroke-linejoin="round"/></svg>
<div class="a" style="left:991px;top:118px;width:78px;height:32px;background:#f1f2f4;border-radius:3px"></div>
<div class="t" style="left:1003.5px;top:128.15px;font-size:14px;letter-spacing:-0.30px;color:#22324f;font-weight:bold">More</div>
<svg style="left:1045px;top:132px" width="9" height="6" viewBox="0 0 9 6"><path d="M1.2 1.2L4.5 4.5 7.8 1.2" stroke="#44546f" stroke-width="1.7" fill="none" stroke-linecap="round" stroke-linejoin="round"/></svg>
<div class="a" style="left:1077.5px;top:118px;width:102px;height:34px;background:#f1f2f4;border-radius:3px"></div>
<div class="a" style="left:1079px;top:120px;width:57px;height:30px;background:#fff;border-radius:3px;box-shadow:0 1px 1px rgba(9,30,66,0.15)"></div>
<div class="t" style="left:1088px;top:128.15px;font-size:14px;letter-spacing:-0.30px;color:#000">BASIC</div>
<div class="t" style="left:1144px;top:128.15px;font-size:14px;letter-spacing:0.27px;color:#626f86">JQL</div>
<svg style="left:1656px;top:124px" width="20" height="20" viewBox="0 0 20 20"><path d="M7.3 3.2A8 8 0 0 0 7.3 17" fill="none" stroke="#172b4d" stroke-width="1.9" stroke-linecap="round"/><path d="M2.6 3H7.5V7.3" fill="none" stroke="#172b4d" stroke-width="1.9" stroke-linecap="round" stroke-linejoin="round"/><path d="M12.9 2.5A8.5 8.5 0 0 1 12.9 16.8" fill="none" stroke="#172b4d" stroke-width="1.9" stroke-linecap="round"/><path d="M12.7 12.7V17H17.3" fill="none" stroke="#172b4d" stroke-width="1.9" stroke-linecap="round" stroke-linejoin="round"/></svg>
<svg style="left:1688px;top:126px" width="20" height="16" viewBox="0 0 20 16"><rect x="1" y="1" width="18" height="14" rx="1.8" fill="none" stroke="#22324f" stroke-width="2"/><path d="M7 1v14M13 1v14" stroke="#22324f" stroke-width="1.8"/></svg>
<div class="a" style="left:1718px;top:118px;width:36px;height:32px;background:#f1f2f4;border-radius:4px"></div>
<svg style="left:1728px;top:126px" width="18" height="17" viewBox="0 0 18 17"><path d="M8.25 1v10.2M3.6 6.6L8.25 11.2 12.9 6.6" fill="none" stroke="#44546f" stroke-width="1.9" stroke-linecap="round" stroke-linejoin="round"/><path d="M2.6 11.5H6.2L8.25 13.6 10.3 11.5H14.2A2.6 2.6 0 0 1 14.2 16.7H2.6A2.6 2.6 0 0 1 2.6 11.5z" fill="#44546f"/><circle cx="14.5" cy="14.3" r="0.8" fill="#fff"/></svg>
<div class="a" style="left:1762px;top:118px;width:37px;height:32px;background:#f1f2f4;border-radius:4px"></div>
<svg style="left:1772px;top:126px" width="18" height="17" viewBox="0 0 18 17"><path d="M8.4 12.3V1.2M3.4 5.9L8.4 1 13.4 5.9" fill="none" stroke="#44546f" stroke-width="1.9" stroke-linecap="round" stroke-linejoin="round"/><path d="M2.6 11.5H7.2L8.4 12.9 9.6 11.5H14.2A2.6 2.6 0 0 1 14.2 16.7H2.6A2.6 2.6 0 0 1 2.6 11.5z" fill="#44546f"/><circle cx="14.5" cy="14.3" r="0.8" fill="#fff"/></svg>
<div class="a" style="left:1807px;top:118px;width:101px;height:32px;background:#0c66e4;border-radius:3px"></div>
<div class="t" style="left:1821px;top:127.15px;font-size:14px;letter-spacing:-0.10px;color:#fff;font-weight:bold">+ Test Case</div>
<div class="a" style="left:584px;top:196px;width:1324px;height:1px;background:#dcdfe4"></div>
<div class="a" style="left:616px;top:170px;width:16px;height:16px;border:1px solid #738496;border-radius:3px;background:#fff"></div>
<div class="t" style="left:674px;top:171.15px;font-size:14px;letter-spacing:0.15px;color:#44546f;font-weight:bold">Issue key</div>
<svg style="left:746px;top:172px" width="10" height="12" viewBox="0 0 10 12"><path d="M5 0.5L9.5 5H0.5z M5 11.5L0.5 7H9.5z" fill="#8590a2"/></svg>
<div class="a" style="left:953px;top:166px;width:2px;height:24px;background:#dcdfe4"></div>
<div class="t" style="left:983px;top:171.15px;font-size:14px;letter-spacing:0.15px;color:#44546f;font-weight:bold">Summary</div>
<svg style="left:1057px;top:172px" width="10" height="12" viewBox="0 0 10 12"><path d="M5 0.5L9.5 5H0.5z M5 11.5L0.5 7H9.5z" fill="#8590a2"/></svg>
<div class="a" style="left:1364px;top:166px;width:2px;height:24px;background:#dcdfe4"></div>
<div class="t" style="left:1394px;top:171.15px;font-size:14px;letter-spacing:0.15px;color:#44546f;font-weight:bold">Assignee</div>
<svg style="left:1465px;top:172px" width="10" height="12" viewBox="0 0 10 12"><path d="M5 0.5L9.5 5H0.5z M5 11.5L0.5 7H9.5z" fill="#8590a2"/></svg>
<div class="a" style="left:1670px;top:160px;width:1px;height:241px;background:#dcdfe4"></div>
<div class="t" style="left:1696px;top:171.15px;font-size:14px;letter-spacing:0.15px;color:#44546f;font-weight:bold">Action</div>
<div class="a" style="left:1904px;top:166px;width:2px;height:24px;background:#dcdfe4"></div>
<div class="a" style="left:584px;top:247px;width:1324px;height:1px;background:#dcdfe4"></div>
<svg style="left:596px;top:215.4px" width="9" height="14" viewBox="0 0 9 14"><circle cx="1.5" cy="1.5" r="1.3" fill="#626f86"/><circle cx="1.5" cy="6.8" r="1.3" fill="#626f86"/><circle cx="1.5" cy="12.1" r="1.3" fill="#626f86"/><circle cx="6.8" cy="1.5" r="1.3" fill="#626f86"/><circle cx="6.8" cy="6.8" r="1.3" fill="#626f86"/><circle cx="6.8" cy="12.1" r="1.3" fill="#626f86"/></svg>
<div class="a" style="left:616px;top:214px;width:16px;height:16px;border:1px solid #738496;border-radius:3px;background:#fff"></div>
<svg style="left:672px;top:214px" width="16" height="16" viewBox="0 0 16 16"><rect x="0" y="0" width="16" height="16" rx="2.5" fill="#1b6b3f"/><circle cx="8" cy="8" r="5.6" fill="none" stroke="#fff" stroke-width="0.9"/><path d="M4.6 8.4l2.2 2.6L12.6 1.6" fill="none" stroke="#fff" stroke-width="1.6" stroke-linecap="round" stroke-linejoin="round"/></svg>
<div class="t" style="left:692px;top:215.15px;font-size:14px;letter-spacing:0.27px;color:#0c66e4">DEMO-4</div>
<div class="t" style="left:981px;top:215.15px;font-size:14px;letter-spacing:0.24px;color:#0a0a0a">Special characters in login credentials are handled cor...</div>
<svg style="left:1702px;top:212px" width="18" height="18" viewBox="0 0 18 18"><path d="M2.1 13.6V4.3c0-1.3 0.8-2.1 2.1-2.1H10.7" fill="none" stroke="#44546f" stroke-width="1.7" stroke-linecap="round"/><rect x="5.1" y="5.1" width="10" height="12.9" rx="2" fill="none" stroke="#44546f" stroke-width="1.7"/></svg>
<svg style="left:1737px;top:212px" width="18" height="18" viewBox="0 0 18 18"><path d="M2.3 4.5H16.7" stroke="#505f79" stroke-width="2.6" stroke-linecap="round"/><path d="M6.2 4c0.2-1 0.7-1.5 1.5-1.5h2.8c0.8 0 1.3 0.5 1.5 1.5z" fill="#505f79"/><path d="M2.9 7.2H15.4L14.1 15.8c-0.2 1-0.8 1.6-1.8 1.6H6.4c-1 0-1.6-0.6-1.8-1.6z" fill="#505f79"/></svg>
<div class="a" style="left:584px;top:298px;width:1324px;height:1px;background:#dcdfe4"></div>
<svg style="left:596px;top:266.4px" width="9" height="14" viewBox="0 0 9 14"><circle cx="1.5" cy="1.5" r="1.3" fill="#626f86"/><circle cx="1.5" cy="6.8" r="1.3" fill="#626f86"/><circle cx="1.5" cy="12.1" r="1.3" fill="#626f86"/><circle cx="6.8" cy="1.5" r="1.3" fill="#626f86"/><circle cx="6.8" cy="6.8" r="1.3" fill="#626f86"/><circle cx="6.8" cy="12.1" r="1.3" fill="#626f86"/></svg>
<div class="a" style="left:616px;top:265px;width:16px;height:16px;border:1px solid #738496;border-radius:3px;background:#fff"></div>
<svg style="left:672px;top:265px" width="16" height="16" viewBox="0 0 16 16"><rect x="0" y="0" width="16" height="16" rx="2.5" fill="#1b6b3f"/><circle cx="8" cy="8" r="5.6" fill="none" stroke="#fff" stroke-width="0.9"/><path d="M4.6 8.4l2.2 2.6L12.6 1.6" fill="none" stroke="#fff" stroke-width="1.6" stroke-linecap="round" stroke-linejoin="round"/></svg>
<div class="t" style="left:692px;top:266.15px;font-size:14px;letter-spacing:0.27px;color:#0c66e4">DEMO-3</div>
<div class="t" style="left:981px;top:266.15px;font-size:14px;letter-spacing:0.33px;color:#0a0a0a">Submitting empty fields prompts validation errors</div>
<svg style="left:1702px;top:263px" width="18" height="18" viewBox="0 0 18 18"><path d="M2.1 13.6V4.3c0-1.3 0.8-2.1 2.1-2.1H10.7" fill="none" stroke="#44546f" stroke-width="1.7" stroke-linecap="round"/><rect x="5.1" y="5.1" width="10" height="12.9" rx="2" fill="none" stroke="#44546f" stroke-width="1.7"/></svg>
<svg style="left:1737px;top:263px" width="18" height="18" viewBox="0 0 18 18"><path d="M2.3 4.5H16.7" stroke="#505f79" stroke-width="2.6" stroke-linecap="round"/><path d="M6.2 4c0.2-1 0.7-1.5 1.5-1.5h2.8c0.8 0 1.3 0.5 1.5 1.5z" fill="#505f79"/><path d="M2.9 7.2H15.4L14.1 15.8c-0.2 1-0.8 1.6-1.8 1.6H6.4c-1 0-1.6-0.6-1.8-1.6z" fill="#505f79"/></svg>
<div class="a" style="left:584px;top:349px;width:1324px;height:1px;background:#dcdfe4"></div>
<svg style="left:596px;top:317.4px" width="9" height="14" viewBox="0 0 9 14"><circle cx="1.5" cy="1.5" r="1.3" fill="#626f86"/><circle cx="1.5" cy="6.8" r="1.3" fill="#626f86"/><circle cx="1.5" cy="12.1" r="1.3" fill="#626f86"/><circle cx="6.8" cy="1.5" r="1.3" fill="#626f86"/><circle cx="6.8" cy="6.8" r="1.3" fill="#626f86"/><circle cx="6.8" cy="12.1" r="1.3" fill="#626f86"/></svg>
<div class="a" style="left:616px;top:316px;width:16px;height:16px;border:1px solid #738496;border-radius:3px;background:#fff"></div>
<svg style="left:672px;top:316px" width="16" height="16" viewBox="0 0 16 16"><rect x="0" y="0" width="16" height="16" rx="2.5" fill="#1b6b3f"/><circle cx="8" cy="8" r="5.6" fill="none" stroke="#fff" stroke-width="0.9"/><path d="M4.6 8.4l2.2 2.6L12.6 1.6" fill="none" stroke="#fff" stroke-width="1.6" stroke-linecap="round" stroke-linejoin="round"/></svg>
<div class="t" style="left:692px;top:317.15px;font-size:14px;letter-spacing:0.27px;color:#0c66e4">DEMO-2</div>
<div class="t" style="left:981px;top:317.15px;font-size:14px;letter-spacing:0.25px;color:#0a0a0a">Attempting to log in with invalid credentials displays a...</div>
<svg style="left:1702px;top:314px" width="18" height="18" viewBox="0 0 18 18"><path d="M2.1 13.6V4.3c0-1.3 0.8-2.1 2.1-2.1H10.7" fill="none" stroke="#44546f" stroke-width="1.7" stroke-linecap="round"/><rect x="5.1" y="5.1" width="10" height="12.9" rx="2" fill="none" stroke="#44546f" stroke-width="1.7"/></svg>
<svg style="left:1737px;top:314px" width="18" height="18" viewBox="0 0 18 18"><path d="M2.3 4.5H16.7" stroke="#505f79" stroke-width="2.6" stroke-linecap="round"/><path d="M6.2 4c0.2-1 0.7-1.5 1.5-1.5h2.8c0.8 0 1.3 0.5 1.5 1.5z" fill="#505f79"/><path d="M2.9 7.2H15.4L14.1 15.8c-0.2 1-0.8 1.6-1.8 1.6H6.4c-1 0-1.6-0.6-1.8-1.6z" fill="#505f79"/></svg>
<div class="a" style="left:584px;top:400px;width:1324px;height:1px;background:#dcdfe4"></div>
<svg style="left:596px;top:368.4px" width="9" height="14" viewBox="0 0 9 14"><circle cx="1.5" cy="1.5" r="1.3" fill="#626f86"/><circle cx="1.5" cy="6.8" r="1.3" fill="#626f86"/><circle cx="1.5" cy="12.1" r="1.3" fill="#626f86"/><circle cx="6.8" cy="1.5" r="1.3" fill="#626f86"/><circle cx="6.8" cy="6.8" r="1.3" fill="#626f86"/><circle cx="6.8" cy="12.1" r="1.3" fill="#626f86"/></svg>
<div class="a" style="left:616px;top:367px;width:16px;height:16px;border:1px solid #738496;border-radius:3px;background:#fff"></div>
<svg style="left:672px;top:367px" width="16" height="16" viewBox="0 0 16 16"><rect x="0" y="0" width="16" height="16" rx="2.5" fill="#1b6b3f"/><circle cx="8" cy="8" r="5.6" fill="none" stroke="#fff" stroke-width="0.9"/><path d="M4.6 8.4l2.2 2.6L12.6 1.6" fill="none" stroke="#fff" stroke-width="1.6" stroke-linecap="round" stroke-linejoin="round"/></svg>
<div class="t" style="left:692px;top:368.15px;font-size:14px;letter-spacing:0.27px;color:#0c66e4">DEMO-1</div>
<div class="t" style="left:981px;top:368.15px;font-size:14px;letter-spacing:0.27px;color:#0a0a0a">Successfully log in with valid credentials</div>
<svg style="left:1702px;top:365px" width="18" height="18" viewBox="0 0 18 18"><path d="M2.1 13.6V4.3c0-1.3 0.8-2.1 2.1-2.1H10.7" fill="none" stroke="#44546f" stroke-width="1.7" stroke-linecap="round"/><rect x="5.1" y="5.1" width="10" height="12.9" rx="2" fill="none" stroke="#44546f" stroke-width="1.7"/></svg>
<svg style="left:1737px;top:365px" width="18" height="18" viewBox="0 0 18 18"><path d="M2.3 4.5H16.7" stroke="#505f79" stroke-width="2.6" stroke-linecap="round"/><path d="M6.2 4c0.2-1 0.7-1.5 1.5-1.5h2.8c0.8 0 1.3 0.5 1.5 1.5z" fill="#505f79"/><path d="M2.9 7.2H15.4L14.1 15.8c-0.2 1-0.8 1.6-1.8 1.6H6.4c-1 0-1.6-0.6-1.8-1.6z" fill="#505f79"/></svg>
<div class="a" style="left:647px;top:197px;width:1px;height:204px;background:#dcdfe4"></div>
<div class="a" style="left:584px;top:401px;width:1324px;height:15px;background:#fafafa;border-top:1px solid #e6e6e6;border-bottom:1px solid #e6e6e6"></div>
<div class="a" style="left:587px;top:405px;width:1073px;height:8px;background:#c1c1c1;border-radius:4px"></div>
<div class="t" style="left:1552px;top:451.15px;font-size:14px;letter-spacing:0.17px;color:#212121">Rows per page:</div>
<div class="t" style="left:1661px;top:450.15px;font-size:14px;letter-spacing:-0.20px;color:#212121">10</div>
<svg style="left:1683px;top:456px" width="10" height="5" viewBox="0 0 10 5"><path d="M0 0h10L5 5z" fill="#757575"/></svg>
<div class="a" style="left:1719px;top:442px;width:32px;height:32px;border:1px solid #dcdfe4;background:#fff;border-radius:4px"></div>
<div class="a" style="left:1757px;top:442px;width:32px;height:32px;border:1px solid #dcdfe4;background:#fff;border-radius:4px"></div>
<div class="a" style="left:1795px;top:442px;width:32px;height:32px;border:1px solid #388bff;background:#e9f2ff;border-radius:4px"></div>
<div class="t" style="left:1795px;width:32px;text-align:center;top:451.15px;font-size:14px;-webkit-text-stroke:0.35px #0c66e4;color:#0c66e4">1</div>
<div class="a" style="left:1833px;top:442px;width:32px;height:32px;border:1px solid #dcdfe4;background:#fff;border-radius:4px"></div>
<div class="a" style="left:1871px;top:442px;width:32px;height:32px;border:1px solid #dcdfe4;background:#fff;border-radius:4px"></div>
<svg style="left:1729px;top:453px" width="12" height="10" viewBox="0 0 12 10"><path d="M1.2 0.5v9" stroke="#8590a2" stroke-width="1.5"/><path d="M9.5 1L5.5 5l4 4" fill="none" stroke="#8590a2" stroke-width="1.5" stroke-linecap="round" stroke-linejoin="round"/></svg>
<svg style="left:1770px;top:453px" width="6" height="10" viewBox="0 0 6 10"><path d="M5 1L1 5l4 4" fill="none" stroke="#8590a2" stroke-width="1.5" stroke-linecap="round" stroke-linejoin="round"/></svg>
<svg style="left:1846px;top:453px" width="6" height="10" viewBox="0 0 6 10"><path d="M1 1l4 4-4 4" fill="none" stroke="#8590a2" stroke-width="1.5" stroke-linecap="round" stroke-linejoin="round"/></svg>
<svg style="left:1881px;top:453px" width="12" height="10" viewBox="0 0 12 10"><path d="M10.8 0.5v9" stroke="#8590a2" stroke-width="1.5"/><path d="M2.5 1l4 4-4 4" fill="none" stroke="#8590a2" stroke-width="1.5" stroke-linecap="round" stroke-linejoin="round"/></svg>
</body></html>
